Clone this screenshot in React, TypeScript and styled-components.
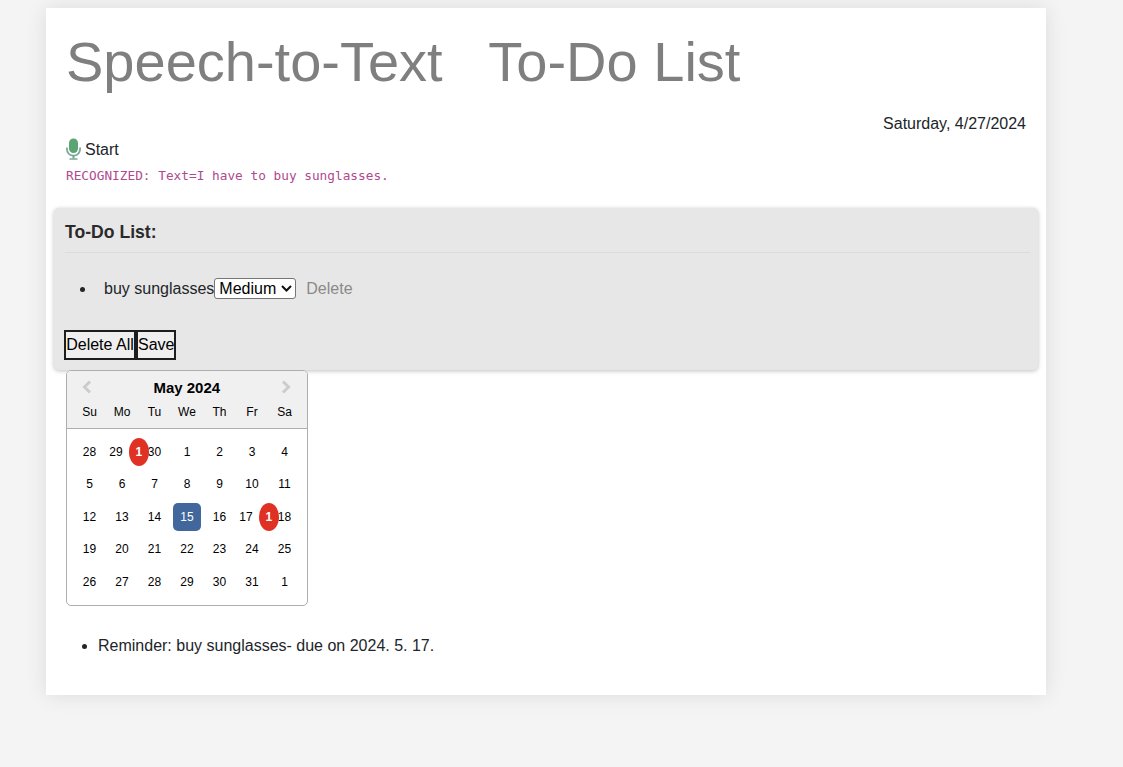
import React from "react";
import styled, { createGlobalStyle } from "styled-components";

const Global = createGlobalStyle`
  html, body { margin: 0; padding: 0; background: #f4f4f4; }
  body { font-family: "Liberation Sans", Arial, sans-serif; font-size: 16px; color: #212529; }
`;
const Page = styled.div`
  min-height: 767px;
  padding: 8px 0 0 46px;
  box-sizing: border-box;
`;
const Card = styled.main`
  width: 1000px;
  height: 687px;
  box-sizing: border-box;
  background: #fff;
  padding: 20px 20px 0;
  box-shadow: 0 0 20px rgba(0, 0, 0, 0.1);
`;
const Title = styled.h1`
  margin: 0;
  font-size: 56px;
  line-height: 67px;
  font-weight: 400;
  color: #7f7f7f;
  white-space: pre;
`;
const DateLine = styled.div`
  margin-top: 20px;
  text-align: right;
  line-height: 18px;
`;
const StartRow = styled.div`
  display: flex;
  align-items: center;
  gap: 3px;
  height: 24px;
  margin-top: 5px;
  line-height: 18px;
`;
const MicIcon = styled.svg`
  margin-top: -2px;
`;
const Recognized = styled.code`
  display: block;
  margin-top: 6px;
  font-family: "DejaVu Sans Mono", monospace;
  font-size: 12.78px;
  line-height: 16px;
  color: #b0498f;
`;
const Panel = styled.section`
  margin: 24px -12px 0;
  height: 162px;
  box-sizing: border-box;
  padding: 0 8px 0 11px;
  background: #e7e7e7;
  border-radius: 5px;
  box-shadow: 0 1px 4px rgba(0, 0, 0, 0.25);
`;
const PanelHead = styled.h2`
  margin: 0;
  height: 45px;
  box-sizing: border-box;
  padding-top: 14px;
  font-size: 17.6px;
  line-height: 20px;
  font-weight: 700;
  border-bottom: 1px solid #dcdcdc;
  color: #2a2a2a;
`;
const TodoList = styled.ul`
  margin: 25px 0 0;
  padding: 0 0 0 39px;
  height: 52px;
  list-style: none;
`;
const TodoItem = styled.li`
  position: relative;
  line-height: 21px;
  & > * { vertical-align: baseline; }
  &::before {
    content: "";
    position: absolute;
    left: -24.5px;
    top: 8.5px;
    width: 5.5px;
    height: 5.5px;
    border-radius: 50%;
    background: #212529;
  }
`;
const Priority = styled.select`
  appearance: none;
  font-family: "Liberation Sans", Arial, sans-serif;
  font-size: 16px;
  width: 82px;
  height: 21px;
  padding: 0 0 0 4px;
  color: #000;
  border: 1px solid #767676;
  border-radius: 3px;
  background: #fff url("data:image/svg+xml,%3Csvg xmlns='http://www.w3.org/2000/svg' width='11' height='7' viewBox='0 0 11 7'%3E%3Cpath d='M1 1l4.500 4.500L10 1' fill='none' stroke='%23111' stroke-width='2'/%3E%3C/svg%3E") no-repeat right 3px center;
`;
const DeleteLink = styled.span`
  color: #8a8a8a;
  margin-left: 10px;
`;
const ButtonRow = styled.div`
  display: flex;
  margin-left: -1px;
`;
const PlainButton = styled.button<{ $w: number }>`
  font-family: "Liberation Sans", Arial, sans-serif;
  font-size: 16px;
  height: 30px;
  padding: 0;
  background: #efefef;
  color: #000;
  border: 2px solid #1d1d1d;
  width: ${(p) => p.$w}px;
`;
const Calendar = styled.div`
  width: 242px;
  height: 236px;
  box-sizing: border-box;
  border: 1px solid #aeaeae;
  border-radius: 5px;
  background: #fff;
  color: #000;
  font-size: 12px;
  overflow: hidden;
`;
const CalHead = styled.div`
  height: 58px;
  box-sizing: border-box;
  background: #f0f0f0;
  border-bottom: 1px solid #aeaeae;
  padding: 0 6.25px;
`;
const MonthRow = styled.div`
  display: flex;
  align-items: center;
  justify-content: space-between;
  height: 33px;
  padding: 0 9.5px 0 9px;
`;
const MonthName = styled.div`
  font-size: 15px;
  font-weight: 700;
  color: #000;
`;
const Arrow = styled.svg`
  margin-top: -2px;
`;
const Weekdays = styled.div`
  display: grid;
  grid-template-columns: repeat(7, 32.5px);
  line-height: 16px;
`;
const Weekday = styled.div`
  text-align: center;
`;
const Month = styled.div`
  display: grid;
  grid-template-columns: repeat(7, 32.5px);
  grid-auto-rows: 32.5px;
  padding: 6.5px 6.25px 0;
`;
const Day = styled.div<{ $selected?: boolean }>`
  position: relative;
  display: flex;
  align-items: center;
  justify-content: center;
  ${(p) =>
    p.$selected
      ? `color:#fff;
         &::before{content:"";position:absolute;left:2px;top:2px;width:28px;height:28px;border-radius:5px;background:#41679c;}`
      : ""}
`;
const DayLabel = styled.span<{ $shift?: boolean }>`
  position: relative;
  transform: translateX(${(p) => (p.$shift ? "-6px" : "0")});
`;
const Badge = styled.span`
  position: absolute;
  left: 23px;
  top: 2px;
  width: 20px;
  height: 28px;
  border-radius: 50%;
  background: #e03125;
  color: #fff;
  font-weight: 700;
  display: flex;
  align-items: center;
  justify-content: center;
  z-index: 1;
`;
const Reminders = styled.ul`
  margin: 31px 0 0;
  padding: 0 0 0 32px;
  line-height: 18px;
`;

const Mic = () => (
  <MicIcon width="16" height="22" viewBox="0 0 16 22" fill="none">
    <rect x="3" y="0.5" width="9" height="14.500" rx="4.500" fill="#5aa572" />
    <path d="M0.900 9.500v1.600c0 3.900 2.900 6.600 6.600 6.600s6.600-2.700 6.600-6.600V9.500" stroke="#7fa79a" strokeWidth="1.800" />
    <path d="M7.500 17.500v3" stroke="#6ea58c" strokeWidth="2" />
    <path d="M3.500 21h8" stroke="#7aa892" strokeWidth="1.500" />
  </MicIcon>
);

const Chevron = ({ left }: { left?: boolean }) => (
  <Arrow width="10" height="14" viewBox="0 0 10 14" fill="none">
    <path d={left ? "M8 1.500 2.500 7 8 12.500" : "M2 1.500 7.500 7 2 12.500"} stroke="#ccc" strokeWidth="3" />
  </Arrow>
);

const weeks = [
  ["28", "29", "30", "1", "2", "3", "4"],
  ["5", "6", "7", "8", "9", "10", "11"],
  ["12", "13", "14", "15", "16", "17", "18"],
  ["19", "20", "21", "22", "23", "24", "25"],
  ["26", "27", "28", "29", "30", "31", "1"],
];
const marked = new Set(["0-1", "2-5"]);

export default function App() {
  return (
    <Page>
      <Global />
      <Card>
        <Title>{"Speech-to-Text   To-Do List"}</Title>
        <DateLine>Saturday, 4/27/2024</DateLine>
        <StartRow>
          <Mic />
          Start
        </StartRow>
        <Recognized>RECOGNIZED: Text=I have to buy sunglasses.</Recognized>
        <Panel>
          <PanelHead>To-Do List:</PanelHead>
          <TodoList>
            <TodoItem>
              buy sunglasses
              <Priority defaultValue="Medium">
                <option>Low</option>
                <option>Medium</option>
                <option>High</option>
              </Priority>
              <DeleteLink>Delete</DeleteLink>
            </TodoItem>
          </TodoList>
          <ButtonRow>
            <PlainButton $w={72}>Delete All</PlainButton>
            <PlainButton $w={40}>Save</PlainButton>
          </ButtonRow>
        </Panel>
        <Calendar>
          <CalHead>
            <MonthRow>
              <Chevron left />
              <MonthName>May 2024</MonthName>
              <Chevron />
            </MonthRow>
            <Weekdays>
              {["Su", "Mo", "Tu", "We", "Th", "Fr", "Sa"].map((d) => (
                <Weekday key={d}>{d}</Weekday>
              ))}
            </Weekdays>
          </CalHead>
          <Month>
            {weeks.map((w, i) =>
              w.map((d, j) => {
                const has = marked.has(`${i}-${j}`);
                return (
                  <Day key={`${i}-${j}`} $selected={d === "15"}>
                    <DayLabel $shift={has}>{d}</DayLabel>
                    {has && <Badge>1</Badge>}
                  </Day>
                );
              })
            )}
          </Month>
        </Calendar>
        <Reminders>
          <li>Reminder: buy sunglasses- due on 2024. 5. 17.</li>
        </Reminders>
      </Card>
    </Page>
  );
}
